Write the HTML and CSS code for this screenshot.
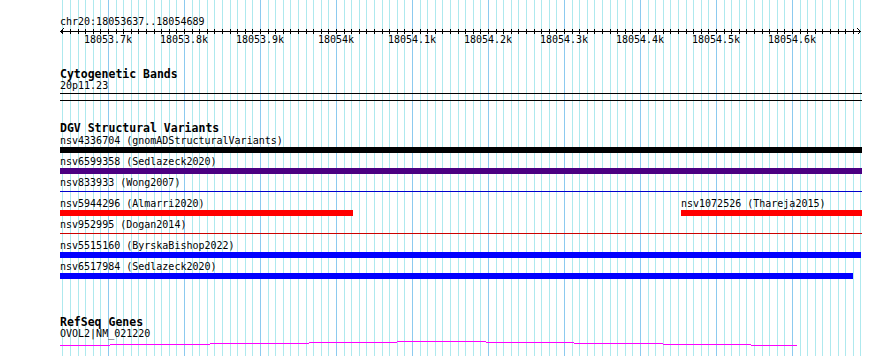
FILE: index.html
```html
<!DOCTYPE html>
<html lang="en">
  <head>
    <meta charset="UTF-8" />
    <meta name="viewport" content="width=device-width, initial-scale=1.0" />
    <link rel="stylesheet" href="styles.css">
    <title>chr20:18053637..18054689</title>
  </head>
  <body>
    <div class="browser">
      <!-- Base position ruler -->
      <div class="ruler">
        <div class="position">chr20:18053637..18054689</div>
        <div class="axis">
          <svg class="axis-line" width="801" height="7" viewBox="0 0 801 7">
            <path d="M0 3.5H801 M0.5 3.5L3.5 0.5 M0.5 3.5L3.5 6.5 M800.5 3.5L797.5 0.5 M800.5 3.5L797.5 6.5" stroke="#000" stroke-width="1" fill="none" shape-rendering="crispEdges" />
          </svg>
        </div>
        <div class="scale">
          <span>18053.7k</span>
          <span>18053.8k</span>
          <span>18053.9k</span>
          <span>18054k</span>
          <span>18054.1k</span>
          <span>18054.2k</span>
          <span>18054.3k</span>
          <span>18054.4k</span>
          <span>18054.5k</span>
          <span>18054.6k</span>
        </div>
      </div>

      <!-- Cytogenetic Bands -->
      <div class="track cyto">
        <h3>Cytogenetic Bands</h3>
        <div class="label">20p11.23</div>
        <div class="band"></div>
      </div>

      <!-- DGV Structural Variants -->
      <div class="track dgv">
        <h3>DGV Structural Variants</h3>
        <div class="row">
          <div class="feature" style="width: 802px">
            <div class="label">nsv4336704 (gnomADStructuralVariants)</div>
            <div class="bar black"></div>
          </div>
        </div>
        <div class="row">
          <div class="feature" style="width: 802px">
            <div class="label">nsv6599358 (Sedlazeck2020)</div>
            <div class="bar purple"></div>
          </div>
        </div>
        <div class="row">
          <div class="feature" style="width: 802px">
            <div class="label">nsv833933 (Wong2007)</div>
            <div class="thin blue"></div>
          </div>
        </div>
        <div class="row">
          <div class="feature" style="width: 293px">
            <div class="label">nsv5944296 (Almarri2020)</div>
            <div class="bar red"></div>
          </div>
          <div class="feature" style="margin-left: 328px; width: 181px">
            <div class="label">nsv1072526 (Thareja2015)</div>
            <div class="bar red"></div>
          </div>
        </div>
        <div class="row">
          <div class="feature" style="width: 802px">
            <div class="label">nsv952995 (Dogan2014)</div>
            <div class="thin dark-red"></div>
          </div>
        </div>
        <div class="row">
          <div class="feature" style="width: 801px">
            <div class="label">nsv5515160 (ByrskaBishop2022)</div>
            <div class="bar blue"></div>
          </div>
        </div>
        <div class="row">
          <div class="feature" style="width: 793px">
            <div class="label">nsv6517984 (Sedlazeck2020)</div>
            <div class="bar blue"></div>
          </div>
        </div>
      </div>

      <!-- RefSeq Genes -->
      <div class="track refseq">
        <h3>RefSeq Genes</h3>
        <div class="label">OVOL2|NM_021220</div>
        <svg class="gene" width="801" height="8" viewBox="0 0 801 8" shape-rendering="crispEdges">
          <g fill="#ff00ff">
            <rect x="0" y="6" width="50" height="1" />
            <rect x="50" y="5" width="100" height="1" />
            <rect x="150" y="4" width="99" height="1" />
            <rect x="249" y="3" width="88" height="1" />
            <rect x="337" y="2" width="89" height="1" />
            <rect x="426" y="3" width="88" height="1" />
            <rect x="514" y="4" width="89" height="1" />
            <rect x="603" y="5" width="88" height="1" />
            <rect x="691" y="6" width="46" height="1" />
          </g>
        </svg>
      </div>
    </div>
  </body>
</html>
```

FILE: styles.css
```css
/* Basic Style */
body {
  margin: 0;
  background: #fff;
  font-family: "DejaVu Sans Mono", "Liberation Mono", monospace;
  font-size: 10px;
  line-height: 10px;
  color: #000;
}

/* Track area with guide lines every 10 bases, one tile per 100 bases */
.browser {
  position: relative;
  margin-left: 60px;
  width: 801px;
  height: 356px;
  padding-top: 17px;
  box-sizing: border-box;
  background-image: linear-gradient(90deg,
    #8ccaef 0 1px, transparent 1px 8px,
    #aee9ee 8px 9px, transparent 9px 15px,
    #aee9ee 15px 16px, transparent 16px 23px,
    #aee9ee 23px 24px, transparent 24px 30px,
    #aee9ee 30px 31px, transparent 31px 38px,
    #aee9ee 38px 39px, transparent 39px 46px,
    #aee9ee 46px 47px, transparent 47px 53px,
    #aee9ee 53px 54px, transparent 54px 61px,
    #aee9ee 61px 62px, transparent 62px 68px,
    #aee9ee 68px 69px, transparent 69px);
  background-size: 76px 100%;
  background-position: 48px 0;
  background-repeat: repeat-x;
}

.label,
.position {
  height: 10px;
  white-space: nowrap;
}

/* Ruler */
.axis {
  position: relative;
  margin-top: 1px;
  width: 797px;
  height: 7px;
  background-image: linear-gradient(90deg,
    #000 0 1px, transparent 1px 8px,
    #000 8px 9px, transparent 9px 15px,
    #000 15px 16px, transparent 16px 23px,
    #000 23px 24px, transparent 24px 30px,
    #000 30px 31px, transparent 31px 38px,
    #000 38px 39px, transparent 39px 46px,
    #000 46px 47px, transparent 47px 53px,
    #000 53px 54px, transparent 54px 61px,
    #000 61px 62px, transparent 62px 68px,
    #000 68px 69px, transparent 69px);
  background-size: 76px 5px;
  background-position: 48px 1px;
  background-repeat: repeat-x;
}
.axis-line {
  display: block;
  overflow: visible;
}
.scale {
  display: flex;
  padding-left: 10px;
  height: 10px;
}
.scale span {
  width: 76px;
  flex: none;
  text-align: center;
}

/* Heading */
h3 {
  margin: 0;
  height: 10px;
  font-size: 11.5px;
  line-height: 10px;
  font-weight: 700;
  white-space: nowrap;
}

/* Cytogenetic Bands */
.cyto {
  margin-top: 24px;
}
.cyto h3 {
  margin-bottom: 2px;
}
.band {
  margin-top: 2px;
  width: 802px;
  height: 6px;
  border-top: 1px solid #000;
  border-bottom: 1px solid #000;
}

/* DGV Structural Variants */
.dgv {
  margin-top: 22px;
}
.dgv h3 {
  margin-bottom: 3px;
}
.row {
  display: flex;
  height: 21px;
}
.feature {
  flex: none;
  display: flex;
  flex-direction: column;
}
.bar {
  margin-top: 1px;
  height: 6px;
}
.thin {
  margin-top: 3px;
  height: 1px;
}
.black {
  background: #000;
}
.purple {
  background: #4b0082;
}
.red {
  background: #ff0000;
}
.blue {
  background: #0000ff;
}
.thin.blue {
  background: #0000cc;
}
.dark-red {
  background: #cc0000;
}

/* RefSeq Genes */
.refseq {
  margin-top: 34px;
}
.refseq h3 {
  margin-bottom: 2px;
}
.gene {
  display: block;
}
```
